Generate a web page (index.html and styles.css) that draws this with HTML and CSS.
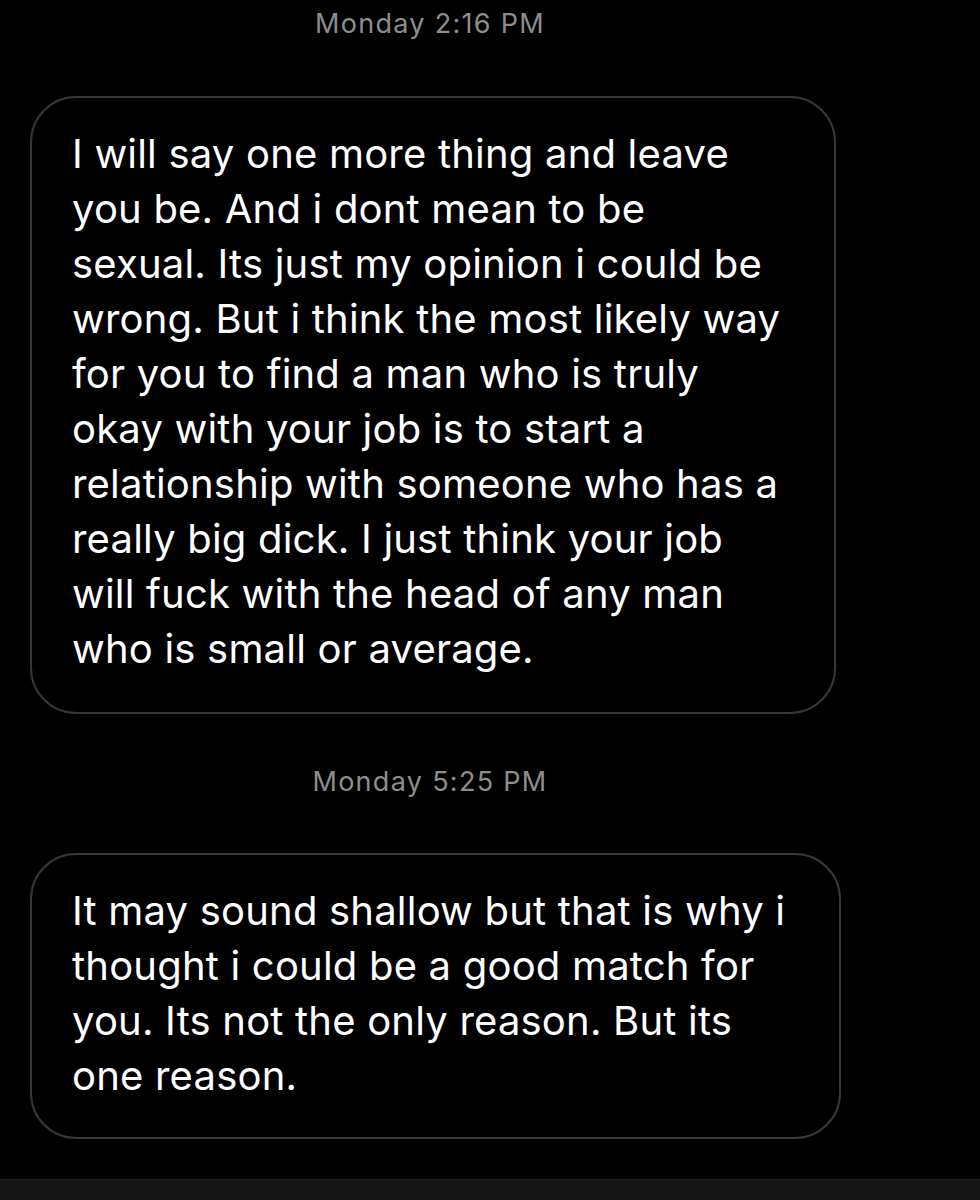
FILE: index.html
```html
<!DOCTYPE html>
<html lang="en">
<head>
    <meta charset="UTF-8">
    <meta name="viewport" content="width=device-width, initial-scale=1.0">
    <title>Messages</title>
    <link rel="stylesheet" href="styles.css">
</head>
<body>

<div class="thread">
    <div class="timestamp">Monday 2:16 PM</div>

    <div class="bubble bubble-long">
        I will say one more thing and leave<br>
        you be. And i dont mean to be<br>
        sexual. Its just my opinion i could be<br>
        wrong. But i think the most likely way<br>
        for you to find a man who is truly<br>
        okay with your job is to start a<br>
        relationship with someone who has a<br>
        really big dick. I just think your job<br>
        will fuck with the head of any man<br>
        who is small or average.
    </div>

    <div class="timestamp timestamp-second">Monday 5:25 PM</div>

    <div class="bubble bubble-short">
        It may sound shallow but that is why i<br>
        thought i could be a good match for<br>
        you. Its not the only reason. But its<br>
        one reason.
    </div>
</div>

<div class="bottom-bar"></div>

</body>
</html>
```

FILE: styles.css
```css
body {
    font-family: 'Inter', 'Noto Sans', sans-serif;
    background-color: #000;
    color: #fff;
    margin: 0;
    height: 1200px;
    overflow: hidden;
    display: flex;
    flex-direction: column;
}

.thread {
    flex: 1;
    width: 800px;
    margin-left: 30px;
    display: flex;
    flex-direction: column;
    align-items: flex-start;
}

.timestamp {
    align-self: center;
    color: #8d8d8d;
    font-size: 27px;
    letter-spacing: 1.3px;
    line-height: 32px;
    margin-top: 8px;
    margin-bottom: 56px;
}

.timestamp-second {
    margin-top: 52px;
    margin-bottom: 55px;
}

.bubble {
    box-sizing: border-box;
    border: 2px solid #373737;
    border-radius: 46px;
    padding: 28px 30px 36px 40px;
    font-size: 40px;
    letter-spacing: 0.2px;
    line-height: 55px;
    white-space: nowrap;
}

.bubble-long {
    width: 806px;
}

.bubble-short {
    width: 811px;
    padding-bottom: 34px;
}

.bottom-bar {
    height: 20px;
    background-color: #161616;
    border-top: 1px solid #222;
}
```
